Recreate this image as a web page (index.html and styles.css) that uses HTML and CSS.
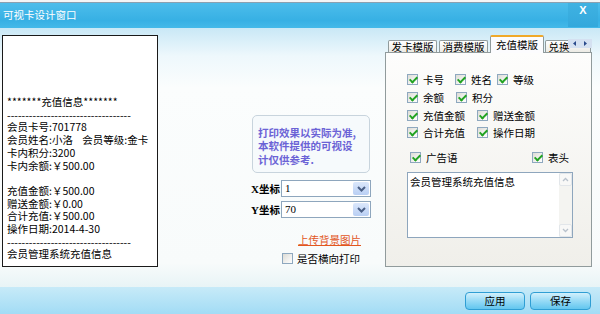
FILE: index.html
```html
<!DOCTYPE html>
<html lang="zh-CN">
<head>
  <meta charset="UTF-8">
  <title>可视卡设计窗口</title>
  <link rel="stylesheet" href="styles.css">
</head>
<body>
  <div class="window">
    <div class="top-strip"></div>
    <div class="title-bar">
      <span class="title">可视卡设计窗口</span>
      <span class="close-btn">X</span>
    </div>

    <div class="main">
      <!-- 小票预览 -->
      <div class="receipt">
<pre class="receipt-text">*******充值信息*******
----------------------------------
会员卡号:701778
会员姓名:小洛    会员等级:金卡
卡内积分:3200
卡内余额:￥500.00

充值金额:￥500.00
赠送金额:￥0.00
合计充值:￥500.00
操作日期:2014-4-30
----------------------------------
会员管理系统充值信息</pre>
      </div>

      <!-- 中间设置 -->
      <div class="middle">
        <div class="tip">
          <div>打印效果以实际为准,</div>
          <div>本软件提供的可视设</div>
          <div>计仅供参考.</div>
        </div>
        <div class="coord-row">
          <label class="coord-label"><b class="axis">X</b>坐标</label>
          <div class="combo">
            <span class="combo-value">1</span>
            <span class="combo-btn"><svg width="9" height="6" viewBox="0 0 9 6"><path d="M1 1 L4.5 4.5 L8 1" fill="none" stroke="#4a5f86" stroke-width="2"/></svg></span>
          </div>
        </div>
        <div class="coord-row second">
          <label class="coord-label"><b class="axis">Y</b>坐标</label>
          <div class="combo">
            <span class="combo-value">70</span>
            <span class="combo-btn"><svg width="9" height="6" viewBox="0 0 9 6"><path d="M1 1 L4.5 4.5 L8 1" fill="none" stroke="#4a5f86" stroke-width="2"/></svg></span>
          </div>
        </div>
        <a class="upload-link" href="#">上传背景图片</a>
        <div class="check-line"><span class="cb"></span>是否横向打印</div>
      </div>

      <!-- 模版选项卡 -->
      <div class="tabs">
        <div class="tab-strip">
          <span class="tab">发卡模版</span>
          <span class="tab">消费模版</span>
          <span class="tab active">充值模版</span>
          <span class="tab last">兑换</span>
          <span class="tab-scroll">
            <svg width="24" height="9" viewBox="0 0 24 9"><path d="M8 2 L5 4.5 L8 7 Z" fill="#2b4b8c"/><path d="M16 2 L19 4.5 L16 7 Z" fill="#2b4b8c"/></svg>
          </span>
        </div>
        <div class="tab-panel">
          <div class="opt-row">
            <label class="opt w48"><span class="cb on"></span>卡号</label>
            <label class="opt w42"><span class="cb on"></span>姓名</label>
            <label class="opt"><span class="cb on"></span>等级</label>
          </div>
          <div class="opt-row">
            <label class="opt w49"><span class="cb on"></span>余额</label>
            <label class="opt"><span class="cb on"></span>积分</label>
          </div>
          <div class="opt-row">
            <label class="opt w70"><span class="cb on"></span>充值金额</label>
            <label class="opt"><span class="cb on"></span>赠送金额</label>
          </div>
          <div class="opt-row">
            <label class="opt w70"><span class="cb on"></span>合计充值</label>
            <label class="opt"><span class="cb on"></span>操作日期</label>
          </div>
          <div class="opt-row ad-row">
            <label class="opt w122"><span class="cb on"></span>广告语</label>
            <label class="opt"><span class="cb on"></span>表头</label>
          </div>
          <div class="ad-box">
            <div class="ad-text">会员管理系统充值信息</div>
            <div class="scrollbar">
              <span class="sb-btn"><svg width="7" height="5" viewBox="0 0 7 5"><path d="M1 4 L3.5 1.5 L6 4" fill="none" stroke="#b9c2cc" stroke-width="1.3"/></svg></span>
              <span class="sb-track"></span>
              <span class="sb-btn"><svg width="7" height="5" viewBox="0 0 7 5"><path d="M1 1 L3.5 3.5 L6 1" fill="none" stroke="#b9c2cc" stroke-width="1.3"/></svg></span>
            </div>
          </div>
        </div>
      </div>
    </div>

    <div class="footer">
      <button class="btn">应用</button>
      <button class="btn wide">保存</button>
    </div>
  </div>
</body>
</html>
```

FILE: styles.css
```css
* {
  box-sizing: border-box;
}

body {
  margin: 0;
  font-family: "Noto Sans CJK SC", "Noto Sans", sans-serif;
  font-size: 10.5px;
  color: #000;
}

.window {
  width: 600px;
  height: 314px;
  display: flex;
  flex-direction: column;
  overflow: hidden;
}

.top-strip {
  height: 3px;
  background: #f3f5f6;
  border-bottom: 1px solid #8aa0b0;
}

.title-bar {
  height: 25px;
  display: flex;
  justify-content: space-between;
  background: linear-gradient(#4cbdeb, #37b0e4 70%, #44b9e9);
  color: #fff;
}

.title {
  padding: 5px 0 0 3px;
  line-height: 14px;
}

.close-btn {
  width: 30px;
  height: 24px;
  margin-right: 2px;
  padding-top: 1px;
  text-align: center;
  line-height: 12px;
  font: bold 11px "Liberation Sans", sans-serif;
  background: linear-gradient(#3fb2e2, #33a8dc);
}

.main {
  height: 259px;
  display: flex;
  align-items: flex-start;
  padding-top: 7px;
  background: linear-gradient(#c9e8f6, #eef8fc 28px, #fbfdfd 60px, #f8fbfb 235px, #e8f4f6);
}

/* receipt preview */
.receipt {
  width: 156px;
  height: 232px;
  margin-left: 2px;
  padding: 60px 0 0 4px;
  background: #fff;
  border: 1px solid #1a1a1a;
}

.receipt-text {
  margin: 0;
  font: inherit;
  line-height: 12.7px;
  white-space: pre;
}

/* middle column */
.middle {
  width: 120px;
  margin-left: 93px;
  padding-top: 80px;
}

.tip {
  width: 118px;
  height: 58px;
  margin-left: 1px;
  padding: 10px 4px 0 5px;
  border: 1px solid #c8d4dd;
  border-radius: 5px;
  background: #f6fafc;
  color: #6b63d6;
  font-weight: bold;
}

.tip div {
  height: 13.3px;
  line-height: 13.3px;
}

.coord-row {
  display: flex;
  align-items: center;
  height: 17px;
  margin-top: 7px;
}

.coord-row.second {
  margin-top: 4px;
}

.coord-label {
  width: 30px;
  font-weight: bold;
}

.axis {
  font-family: "Liberation Serif", serif;
  font-size: 11px;
}

.combo {
  width: 90px;
  height: 17px;
  display: flex;
  justify-content: space-between;
  border: 1px solid #8ea6bd;
  background: #fff;
}

.combo-value {
  padding-left: 3px;
  line-height: 15px;
  font-family: "Liberation Serif", serif;
  font-size: 11px;
}

.combo-btn {
  width: 16px;
  margin: 1px;
  display: flex;
  align-items: center;
  justify-content: center;
  background: linear-gradient(#dbe7fb, #b9cff4);
  border-radius: 2px;
}

.upload-link {
  display: block;
  margin: 16px 0 0 47px;
  line-height: 12px;
  color: #e2561e;
}

.check-line {
  display: flex;
  align-items: center;
  height: 12px;
  margin: 6px 0 0 31px;
}

.check-line .cb {
  margin-right: 4px;
}

/* checkbox */
.cb {
  position: relative;
  flex: none;
  width: 11px;
  height: 11px;
  margin-right: 5px;
  border: 1px solid #8ea8bf;
  background: linear-gradient(135deg, #dddcd6, #fff);
}

.cb.on::after {
  content: "";
  position: absolute;
  left: 3px;
  top: 0;
  width: 3px;
  height: 6px;
  border: solid #22a322;
  border-width: 0 2px 2px 0;
  transform: rotate(45deg);
}

/* tabs */
.tabs {
  width: 207px;
  margin-left: 14px;
}

.tab-strip {
  position: relative;
  z-index: 1;
  height: 18px;
  display: flex;
  align-items: flex-end;
  padding-left: 3px;
  overflow: hidden;
}

.tab {
  flex: none;
  height: 12px;
  margin: 0 2px 1px 0;
  padding: 0 2.5px;
  line-height: 11px;
  border: 1px solid #919b9c;
  border-bottom: none;
  border-radius: 2px 2px 0 0;
  background: linear-gradient(#fff, #ecebe5);
  white-space: nowrap;
}

.tab.active {
  height: 18px;
  margin-bottom: 0;
  padding: 2px 5px 0;
  border-top: 2px solid #f0a92a;
  background: #fcfcfe;
}

.tab.last {
  margin-left: -1px;
  padding-right: 20px;
}

.tab-scroll {
  position: absolute;
  right: 0;
  top: 4px;
  width: 24px;
  height: 9px;
  display: flex;
  background: #d5e1f1;
}

.tab-panel {
  height: 215px;
  margin-top: -1px;
  padding: 18px 0 0 21px;
  border: 1px solid #919b9c;
  background: linear-gradient(#fdfdfc, #f0efea);
}

.opt-row {
  display: flex;
  height: 17.7px;
}

.opt {
  display: flex;
  align-items: center;
}

.w42 { width: 42px; }
.w48 { width: 48px; }
.w49 { width: 49px; }
.w70 { width: 70px; }
.w122 { width: 122px; }

.ad-row {
  margin-top: 7.3px;
  padding-left: 3px;
}

.ad-box {
  width: 166px;
  height: 66px;
  margin-top: 5px;
  display: flex;
  border: 1px solid #8ea6bd;
  background: #fff;
}

.ad-text {
  flex: 1;
  padding: 2px 2px;
  line-height: 14px;
}

.scrollbar {
  width: 13px;
  display: flex;
  flex-direction: column;
  background: #f4f4f1;
}

.sb-btn {
  height: 13px;
  display: flex;
  align-items: center;
  justify-content: center;
  border: 1px solid #e2e6ea;
  border-radius: 2px;
  background: #f8f8f7;
}

.sb-track {
  flex: 1;
}

/* bottom bar */
.footer {
  height: 27px;
  display: flex;
  justify-content: flex-end;
  align-items: center;
  gap: 5px;
  padding-right: 9px;
  background: linear-gradient(#c7eaf8, #a2dcf5);
}

.btn {
  width: 60px;
  height: 18px;
  padding: 0;
  font: inherit;
  border: 1px solid #2f9ed4;
  border-radius: 4px;
  background: linear-gradient(#d2f0fc, #96daf6 50%, #62c6ef);
  color: #000;
}

.btn.wide {
  width: 61px;
}
```
